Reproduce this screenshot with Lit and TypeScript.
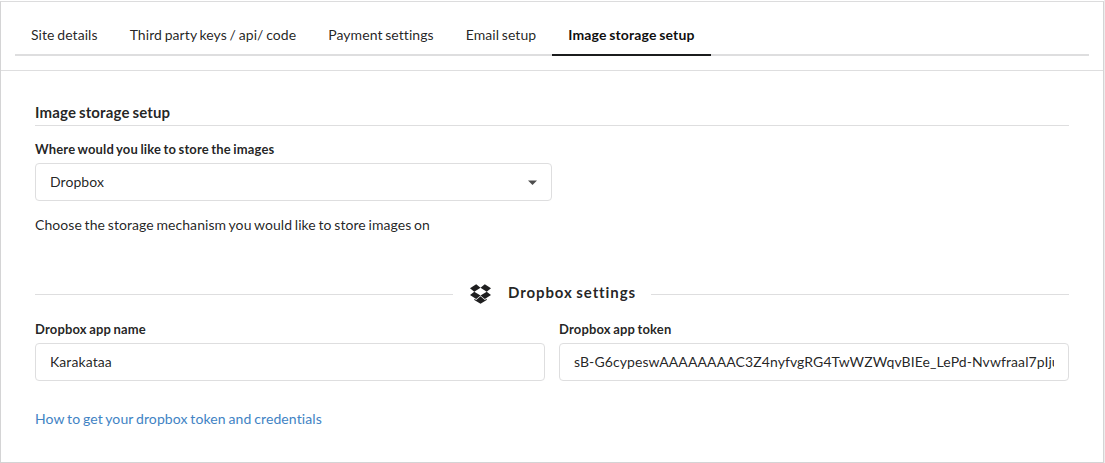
import { LitElement, html, css } from "lit";
import { customElement, state } from "lit/decorators.js";

@customElement("app-root")
export class AppRoot extends LitElement {
  static styles = css`
    :host { display: block; height: 463px; overflow: hidden; background: #fff; padding-top: 1px; box-sizing: border-box;
      font: 14px/20px Lato, sans-serif; color: rgba(0, 0, 0, 0.87); border-right: 1px solid #ededed;
      letter-spacing: 0.07px; word-spacing: -0.95px; font-variant-ligatures: none; }
    * { box-sizing: border-box; }
    .panel { height: 462px; border: 1px solid #d4d4d5; border-top-color: #dcdcdd; }
    .top { height: 69px; padding: 14px 14px 0; border-bottom: 1px solid #dededf; }
    .tabs { display: flex; height: 40px; border-bottom: 2px solid #dededf; }
    .tab { height: 40px; padding: 9px 16px 0; border-bottom: 2px solid transparent; white-space: nowrap; cursor: pointer; }
    .tab.active { font-weight: 700; letter-spacing: 0.15px; color: rgba(0, 0, 0, 0.95); border-color: #1b1c1d; }
    .body { padding: 31px 34px 0; }
    h4 { margin: 0; height: 24px; font-size: 15px; line-height: 20px; letter-spacing: 0.15px; border-bottom: 1px solid #dededf; }
    label { display: block; font-size: 13px; font-weight: 700; line-height: 18px; letter-spacing: 0.17px; margin-bottom: 5px; }
    .store { margin-top: 14px; width: 517px; }
    .control { display: flex; align-items: center; justify-content: space-between; height: 38px; padding: 0 14px;
      border: 1px solid #dededf; border-radius: 4px; }
    .arrow { width: 9px; height: 5px; margin-top: 1px; fill: #4d4d4d; }
    .help { margin: 14px 0 0; }
    .divider { display: flex; align-items: center; margin-top: 46px; height: 24px; }
    .divider::before, .divider::after { content: ""; flex: 1; border-top: 1px solid #dededf; margin-top: 2px; }
    .title { display: flex; align-items: center; padding: 0 15px 2px 17px; font-size: 15px; font-weight: 700; letter-spacing: 0.9px; }
    .logo { width: 21px; height: 20px; margin-right: 17px; margin-top: 3px; fill: #1f1f20; }
    .fields { display: grid; grid-template-columns: 510px 510px; gap: 14px; margin-top: 15px; }
    input { display: block; width: 100%; height: 38px; margin: 0; padding: 0 14px 2px; border: 1px solid #dededf; border-radius: 4px;
      font: 14px/17px Lato, sans-serif; letter-spacing: 0.09px; color: rgba(0, 0, 0, 0.87); outline: none; background: #fff; font-variant-ligatures: none; }
    a { display: inline-block; margin-top: 28px; color: #4183c4; letter-spacing: 0.11px; text-decoration: none; }
  `;

  @state() private active = 4;

  private tabs = ["Site details", "Third party keys / api/ code", "Payment settings", "Email setup", "Image storage setup"];

  render() {
    return html`
      <div class="panel">
        <div class="top">
          <nav class="tabs">
            ${this.tabs.map((t, i) => html`<div class="tab ${i === this.active ? "active" : ""}" @click=${() => (this.active = i)}>${t}</div>`)}
          </nav>
        </div>
        <div class="body">
          <h4>Image storage setup</h4>
          <div class="store">
            <label>Where would you like to store the images</label>
            <div class="control">
              <span>Dropbox</span>
              <svg class="arrow" viewBox="0 0 9 5"><path d="M0 .5h9L4.5 5z" /></svg>
            </div>
          </div>
          <p class="help">Choose the storage mechanism you would like to store images on</p>
          <div class="divider">
            <div class="title">
              <svg class="logo" viewBox="64 240 1664 1546">
                <path d="M402 829l494 305-342 285-490-319zM1388 1384v108l-490 293-491-293v-108l147 96 342-284 343 284zM554 240l342 285-494 304-338-270zM1390 829l338 271-489 319-343-285zM1239 240l489 319-338 270-494-304z" />
              </svg>
              <span>Dropbox settings</span>
            </div>
          </div>
          <div class="fields">
            <div><label>Dropbox app name</label><input type="text" value="Karakataa" /></div>
            <div><label>Dropbox app token</label><input type="text" value="sB-G6cypeswAAAAAAAAC3Z4nyfvgRG4TwWZWqvBIEe_LePd-Nvwfraal7pIju" /></div>
          </div>
          <a href="#">How to get your dropbox token and credentials</a>
        </div>
      </div>
    `;
  }
}
